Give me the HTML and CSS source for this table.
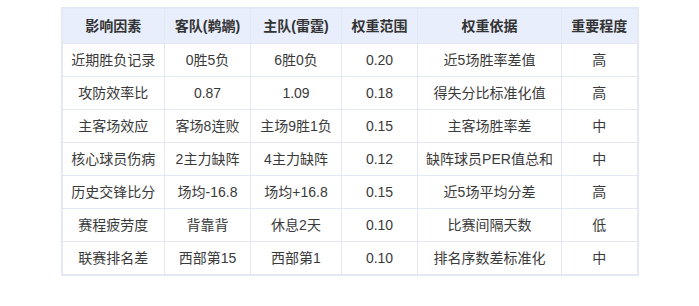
FILE: index.html
```html
<!DOCTYPE html>
<html lang="zh-CN">
<head>
  <meta charset="UTF-8">
  <meta name="viewport" content="width=device-width, initial-scale=1.0">
  <title>影响因素权重</title>
  <link rel="stylesheet" href="styles.css">
</head>
<body>
  <table class="factor-table">
    <colgroup>
      <col class="col-factor">
      <col class="col-away">
      <col class="col-home">
      <col class="col-weight">
      <col class="col-basis">
      <col class="col-level">
    </colgroup>
    <thead>
      <tr>
        <th>影响因素</th>
        <th>客队(鹈鹕)</th>
        <th>主队(雷霆)</th>
        <th>权重范围</th>
        <th>权重依据</th>
        <th>重要程度</th>
      </tr>
    </thead>
    <tbody>
      <tr>
        <td>近期胜负记录</td>
        <td>0胜5负</td>
        <td>6胜0负</td>
        <td>0.20</td>
        <td>近5场胜率差值</td>
        <td>高</td>
      </tr>
      <tr>
        <td>攻防效率比</td>
        <td>0.87</td>
        <td>1.09</td>
        <td>0.18</td>
        <td>得失分比标准化值</td>
        <td>高</td>
      </tr>
      <tr>
        <td>主客场效应</td>
        <td>客场8连败</td>
        <td>主场9胜1负</td>
        <td>0.15</td>
        <td>主客场胜率差</td>
        <td>中</td>
      </tr>
      <tr>
        <td>核心球员伤病</td>
        <td>2主力缺阵</td>
        <td>4主力缺阵</td>
        <td>0.12</td>
        <td>缺阵球员PER值总和</td>
        <td>中</td>
      </tr>
      <tr>
        <td>历史交锋比分</td>
        <td>场均-16.8</td>
        <td>场均+16.8</td>
        <td>0.15</td>
        <td>近5场平均分差</td>
        <td>高</td>
      </tr>
      <tr>
        <td>赛程疲劳度</td>
        <td>背靠背</td>
        <td>休息2天</td>
        <td>0.10</td>
        <td>比赛间隔天数</td>
        <td>低</td>
      </tr>
      <tr>
        <td>联赛排名差</td>
        <td>西部第15</td>
        <td>西部第1</td>
        <td>0.10</td>
        <td>排名序数差标准化</td>
        <td>中</td>
      </tr>
    </tbody>
  </table>
</body>
</html>
```

FILE: styles.css
```css
body {
  margin: 0;
  padding: 7px 0 0;
  font-family: 'Liberation Sans', Arial, 'Noto Sans CJK SC', sans-serif;
  font-size: 14px;
  color: #333;
  background: #fff;
}

.factor-table {
  margin: 0 auto;
  width: 576px;
  border-collapse: collapse;
  table-layout: fixed;
  border: 2px solid #e3e8f4;
}

.col-factor { width: 103px; }
.col-away { width: 86px; }
.col-home { width: 91px; }
.col-weight { width: 76px; }
.col-basis { width: 144px; }
.col-level { width: 76px; }

.factor-table th,
.factor-table td {
  border: 1px solid #e3e8f4;
  text-align: center;
  padding: 0 4px;
  line-height: 18px;
  white-space: nowrap;
}

.factor-table th {
  height: 34px;
  background-color: #e8eefb;
  font-weight: bold;
  color: #333;
}

.factor-table td {
  height: 32px;
  color: #3a3a3a;
}
```
